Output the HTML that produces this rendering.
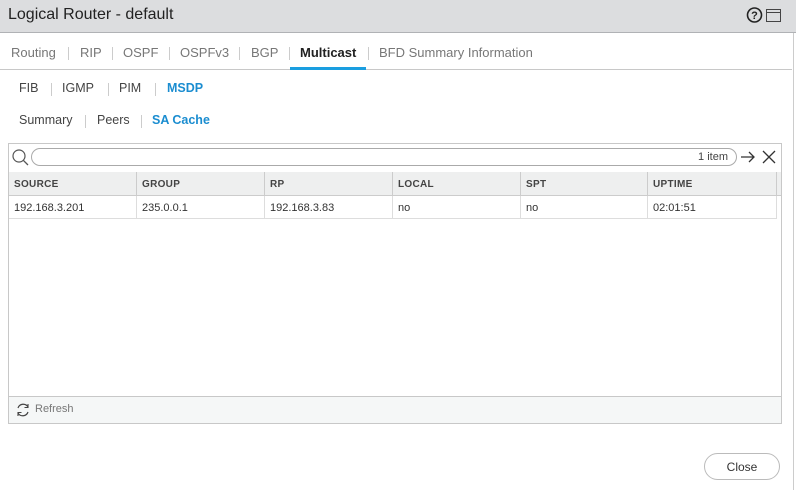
<!DOCTYPE html>
<html><head><style>
*{box-sizing:border-box;margin:0;padding:0}
body{width:796px;height:490px;background:#fff;font-family:"Liberation Sans",sans-serif;position:relative;overflow:hidden;color:#333}
.a{position:absolute}
.hdr{left:0;top:0;width:796px;height:33px;background:#dcdddf;border-bottom:1px solid #b0b2b5}
.title{left:8px;top:6px;font-size:16px;color:#222}
.tabs{left:0;top:33px;width:792px;height:37px;border-bottom:1px solid #c8c8c8}
.t{position:absolute;top:12px;font-size:13px;color:#777}
.sep{position:absolute;width:1px;height:13px;background:#ccc}
.st{position:absolute;font-size:12.5px;color:#444}
.grid{left:8px;top:143px;width:774px;height:281px;border:1px solid #c8c8c8}
.th{position:absolute;top:28px;height:24px;background:#eeefef;border-bottom:1px solid #ccc;font-size:10px;font-weight:bold;color:#444;padding:7px 0 0 5px;border-right:1px solid #ccc;letter-spacing:.3px}
.td{position:absolute;top:52px;height:23px;border-bottom:1px solid #ddd;border-right:1px solid #ddd;font-size:11px;color:#333;padding:6px 0 0 5px}
</style></head><body>
<div class="a hdr"></div>
<div class="a title">Logical Router - default</div>
<svg class="a" style="left:746px;top:6px" width="40" height="20"><circle cx="8.5" cy="9" r="7" fill="none" stroke="#222" stroke-width="1.6"/><text x="8.5" y="13" font-size="11" font-weight="bold" text-anchor="middle" font-family="Liberation Sans" fill="#222">?</text><rect x="20.5" y="3.5" width="14" height="12" fill="none" stroke="#444"/><line x1="20.5" y1="6.5" x2="34.5" y2="6.5" stroke="#444"/></svg>
<div class="a" style="left:793px;top:33px;width:1px;height:457px;background:#ccc"></div>
<div class="a tabs">
<span class="t" style="left:11px">Routing</span><span class="sep" style="left:68px;top:14px"></span>
<span class="t" style="left:80px">RIP</span><span class="sep" style="left:112px;top:14px"></span>
<span class="t" style="left:123px">OSPF</span><span class="sep" style="left:169px;top:14px"></span>
<span class="t" style="left:180px">OSPFv3</span><span class="sep" style="left:239px;top:14px"></span>
<span class="t" style="left:251px">BGP</span><span class="sep" style="left:289px;top:14px"></span>
<span class="t" style="left:300px;color:#222;font-weight:bold">Multicast</span>
<div style="position:absolute;left:290px;top:34px;width:76px;height:3px;background:#1a9ee0"></div>
<span class="sep" style="left:368px;top:14px"></span>
<span class="t" style="left:379px">BFD Summary Information</span>
</div>
<span class="st a" style="left:19px;top:81px">FIB</span><span class="a sep" style="left:51px;top:83px"></span>
<span class="st a" style="left:62px;top:81px">IGMP</span><span class="a sep" style="left:108px;top:83px"></span>
<span class="st a" style="left:119px;top:81px">PIM</span><span class="a sep" style="left:155px;top:83px"></span>
<span class="st a" style="left:167px;top:81px;color:#1b8dd0;font-weight:bold">MSDP</span>
<span class="st a" style="left:19px;top:113px">Summary</span><span class="a sep" style="left:85px;top:115px"></span>
<span class="st a" style="left:97px;top:113px">Peers</span><span class="a sep" style="left:141px;top:115px"></span>
<span class="st a" style="left:152px;top:113px;color:#1b8dd0;font-weight:bold">SA Cache</span>
<div class="a grid">
<svg style="position:absolute;left:2px;top:4px" width="20" height="20"><circle cx="8" cy="8" r="6" fill="none" stroke="#555" stroke-width="1.2"/><line x1="12.3" y1="12.3" x2="17" y2="17" stroke="#555" stroke-width="1.3"/></svg>
<div style="position:absolute;left:22px;top:4px;width:706px;height:18px;border:1px solid #aaa;border-radius:9px;font-size:11px;color:#444;text-align:right;padding:2px 8px 0 0">1 item</div>
<svg style="position:absolute;left:729px;top:4px" width="44" height="18"><path d="M3 9H16M11 4L16 9L11 14" fill="none" stroke="#333" stroke-width="1.3"/><path d="M25 3L37 15M37 3L25 15" stroke="#333" stroke-width="1.3"/></svg>
<div class="th" style="left:0;width:128px">SOURCE</div>
<div class="th" style="left:128px;width:128px">GROUP</div>
<div class="th" style="left:256px;width:128px">RP</div>
<div class="th" style="left:384px;width:128px">LOCAL</div>
<div class="th" style="left:512px;width:127px">SPT</div>
<div class="th" style="left:639px;width:129px">UPTIME</div>
<div class="th" style="left:768px;width:4px;border-right:none;padding:0"></div>
<div class="td" style="left:0;width:128px">192.168.3.201</div>
<div class="td" style="left:128px;width:128px">235.0.0.1</div>
<div class="td" style="left:256px;width:128px">192.168.3.83</div>
<div class="td" style="left:384px;width:128px">no</div>
<div class="td" style="left:512px;width:127px">no</div>
<div class="td" style="left:639px;width:129px">02:01:51</div>
<div style="position:absolute;left:0;top:252px;width:772px;height:27px;background:#f5f7f7;border-top:1px solid #c8c8c8">
<svg style="position:absolute;left:6px;top:5px" width="16" height="16"><path d="M3 6A5.5 5.5 0 0 1 13 5M13 10A5.5 5.5 0 0 1 3 11" fill="none" stroke="#444" stroke-width="1.2"/><path d="M13 2V5.5H9.5M3 14V10.5H6.5" fill="none" stroke="#444" stroke-width="1.1"/></svg>
<span style="position:absolute;left:26px;top:6px;font-size:11px;color:#777">Refresh</span></div>
</div>
<div class="a" style="left:704px;top:453px;width:76px;height:27px;border:1px solid #bbb;border-radius:14px;font-size:12px;color:#333;text-align:center;padding-top:6px">Close</div>
</body></html>
